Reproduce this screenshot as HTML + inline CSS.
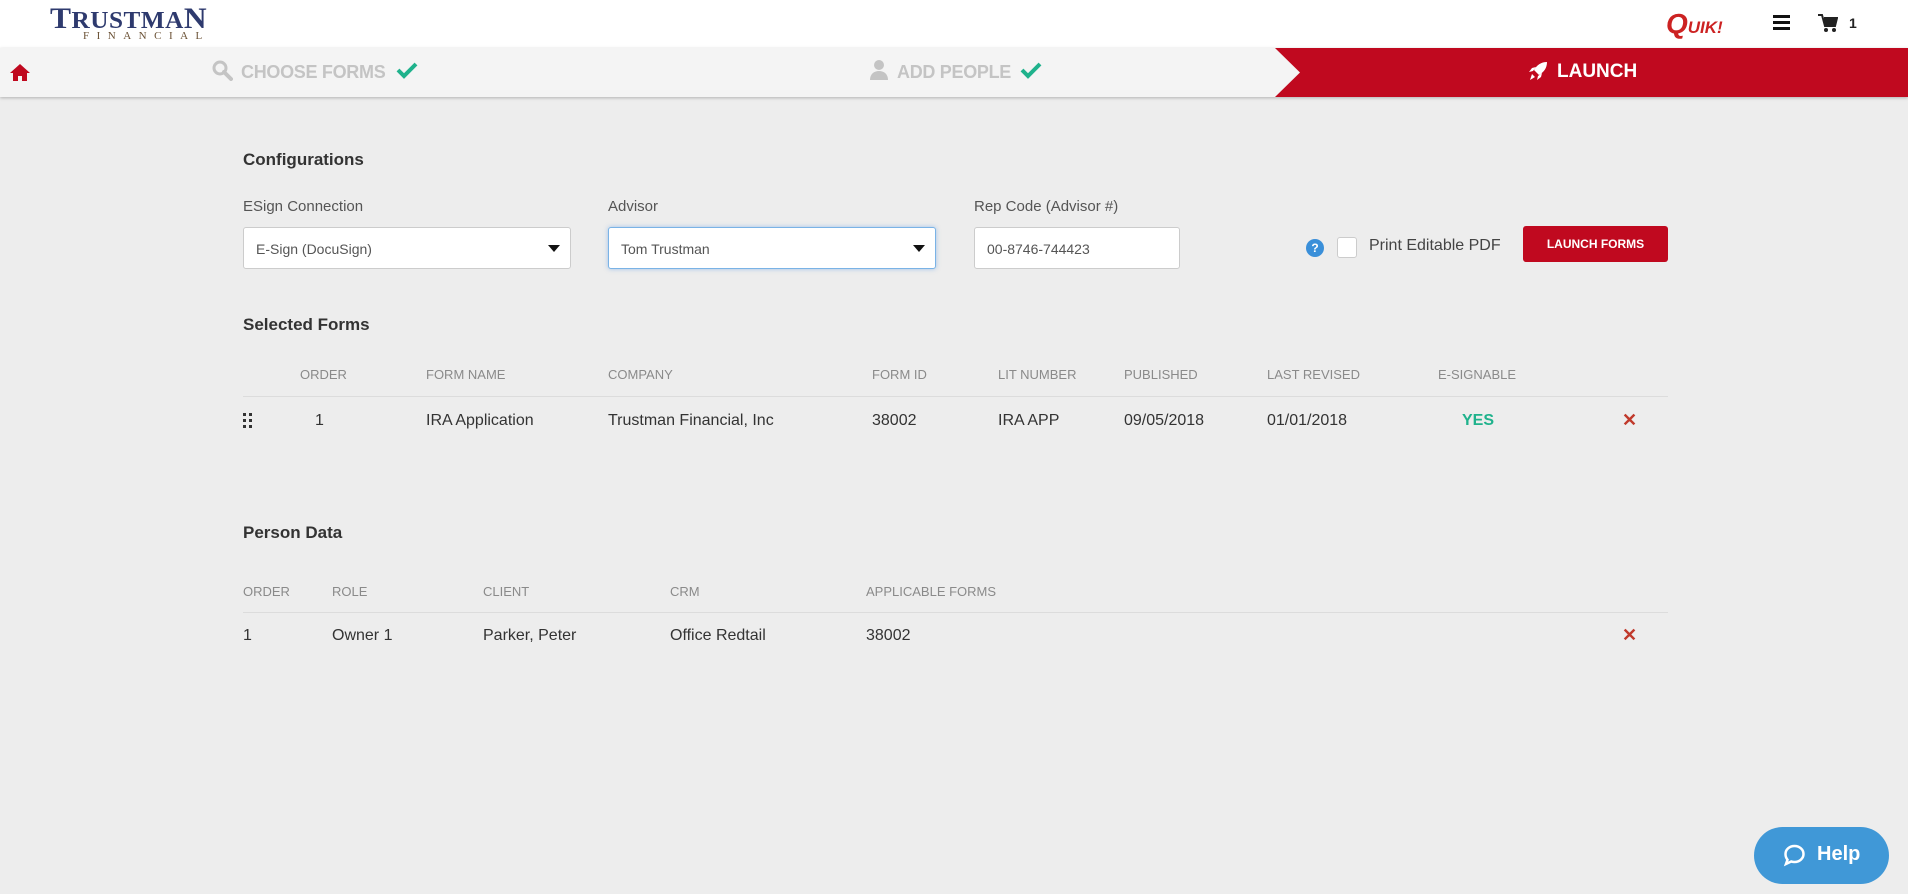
<!DOCTYPE html>
<html><head><meta charset="utf-8"><style>
*{margin:0;padding:0;box-sizing:border-box}
body{width:1908px;height:894px;background:#ededed;font-family:"Liberation Sans",sans-serif;color:#333;position:relative;overflow:hidden}
.a{position:absolute;white-space:nowrap}
.hdr{position:absolute;left:0;top:0;width:1908px;height:48px;background:#fff}
.nav{position:absolute;left:0;top:48px;width:1908px;height:49px;background:#f4f4f4;box-shadow:0 1px 3px rgba(0,0,0,.25)}
.step{font-size:18px;font-weight:bold;color:#c4c4c4;letter-spacing:-0.3px}
.lbl{font-size:15px;color:#555}
.box{position:absolute;top:227px;height:42px;background:#fff;border:1px solid #ccc;border-radius:3px;font-size:14px;color:#555;padding:13px 12px}
.tri{position:absolute;right:10px;top:17px;width:0;height:0;border-left:6px solid transparent;border-right:6px solid transparent;border-top:7px solid #111}
.th{font-size:13px;color:#8a8a8a}
.td{font-size:16px;color:#333}
.sec{font-size:17px;font-weight:bold;color:#333}
.x{color:#c0392b;font-size:18px;font-weight:bold}
</style></head><body>
<div class="hdr">
  <div class="a" style="left:50px;top:2px;font-family:'Liberation Serif',serif;font-weight:bold;font-size:30px;color:#2e3a6e;letter-spacing:0.5px;transform:scaleX(1.05);transform-origin:left">T<span style="font-size:24px">RUSTMA</span>N</div>
  <div class="a" style="left:83px;top:30px;font-family:'Liberation Serif',serif;font-size:11px;color:#6b5236;letter-spacing:7.5px">FINANCIAL</div>
  <div class="a" style="left:1666px;top:8px;font-size:22px;font-weight:bold;font-style:italic;color:#c22"><span style="font-size:28px">Q</span><span style="color:#c22;font-size:17px">UIK!</span></div>
  <div class="a" style="left:1773px;top:15px;width:17px;height:3px;background:#111;box-shadow:0 6px 0 #111,0 12px 0 #111"></div>
  <svg class="a" style="left:1818px;top:14px" width="20" height="19" viewBox="0 0 20 19"><path d="M0 1h4l3 11h10l2-8H6" fill="none" stroke="#222" stroke-width="2"/><rect x="6" y="4" width="12" height="7" fill="#222"/><circle cx="8" cy="16" r="2" fill="#222"/><circle cx="16" cy="16" r="2" fill="#222"/></svg>
  <div class="a" style="left:1849px;top:15px;font-size:14px;font-weight:bold;color:#222">1</div>
</div>
<div class="nav">
  <svg class="a" style="left:9px;top:15px" width="22" height="19" viewBox="0 0 22 19"><path d="M11 1L1 10h3v8h5v-5h4v5h5v-8h3z" fill="#c0091f"/></svg>
  <svg class="a" style="left:212px;top:12px" width="21" height="21" viewBox="0 0 21 21"><circle cx="8" cy="8" r="6" fill="none" stroke="#c4c4c4" stroke-width="3"/><path d="M12 12l7 7" stroke="#c4c4c4" stroke-width="4" stroke-linecap="round"/></svg>
  <div class="a step" style="left:241px;top:14px">CHOOSE FORMS</div>
  <svg class="a" style="left:396px;top:13px" width="22" height="18" viewBox="0 0 22 18"><path d="M2 9l6 6L20 3" fill="none" stroke="#1fb28c" stroke-width="4"/></svg>
  <svg class="a" style="left:869px;top:11px" width="20" height="22" viewBox="0 0 20 22"><circle cx="10" cy="6" r="5" fill="#c4c4c4"/><path d="M1 21c0-6 4-9 9-9s9 3 9 9z" fill="#c4c4c4"/></svg>
  <div class="a step" style="left:897px;top:14px">ADD PEOPLE</div>
  <svg class="a" style="left:1020px;top:13px" width="22" height="18" viewBox="0 0 22 18"><path d="M2 9l6 6L20 3" fill="none" stroke="#1fb28c" stroke-width="4"/></svg>
  <svg class="a" style="left:1275px;top:0" width="633" height="49"><path d="M0 0H633V49H0L25 24.5Z" fill="#c0091f"/></svg>
  <svg class="a" style="left:1527px;top:12px" width="22" height="22" viewBox="0 0 22 22"><path d="M20 2c-6 0-10 3-13 8l5 5c5-3 8-7 8-13zM6 11l-4 1 3-4 4-1zM11 16l-1 4 4-3 1-4zM5 14l3 3-5 3z" fill="#fff"/></svg>
  <div class="a" style="left:1557px;top:13px;font-size:19px;font-weight:bold;color:#fff">LAUNCH</div>
</div>

<div class="a sec" style="left:243px;top:150px">Configurations</div>
<div class="a lbl" style="left:243px;top:198px">ESign Connection</div>
<div class="a lbl" style="left:608px;top:198px">Advisor</div>
<div class="a lbl" style="left:974px;top:198px">Rep Code (Advisor #)</div>
<div class="box" style="left:243px;width:328px">E-Sign (DocuSign)<div class="tri"></div></div>
<div class="box" style="left:608px;width:328px;border-color:#7ab3e6;box-shadow:0 0 5px rgba(80,150,230,.5)">Tom Trustman<div class="tri"></div></div>
<div class="box" style="left:974px;width:206px">00-8746-744423</div>
<div class="a" style="left:1306px;top:239px;width:18px;height:18px;border-radius:50%;background:#3a8fd9;color:#fff;font-size:12px;font-weight:bold;text-align:center;line-height:18px">?</div>
<div class="a" style="left:1337px;top:237px;width:20px;height:21px;background:#fff;border:1px solid #ccc;border-radius:3px"></div>
<div class="a" style="left:1369px;top:237px;font-size:16px;color:#444">Print Editable PDF</div>
<div class="a" style="left:1523px;top:226px;width:145px;height:36px;background:#c0091f;border-radius:3px;color:#fff;font-size:12px;font-weight:bold;text-align:center;line-height:36px">LAUNCH FORMS</div>

<div class="a sec" style="left:243px;top:315px">Selected Forms</div>
<div class="a th" style="left:300px;top:367px">ORDER</div>
<div class="a th" style="left:426px;top:367px">FORM NAME</div>
<div class="a th" style="left:608px;top:367px">COMPANY</div>
<div class="a th" style="left:872px;top:367px">FORM ID</div>
<div class="a th" style="left:998px;top:367px">LIT NUMBER</div>
<div class="a th" style="left:1124px;top:367px">PUBLISHED</div>
<div class="a th" style="left:1267px;top:367px">LAST REVISED</div>
<div class="a th" style="left:1438px;top:367px">E-SIGNABLE</div>
<div class="a" style="left:243px;top:396px;width:1425px;height:1px;background:#dcdcdc"></div>
<svg class="a" style="left:243px;top:413px" width="10" height="16"><g fill="#333"><rect x="0" y="0" width="3" height="3"/><rect x="6" y="0" width="3" height="3"/><rect x="0" y="6" width="3" height="3"/><rect x="6" y="6" width="3" height="3"/><rect x="0" y="12" width="3" height="3"/><rect x="6" y="12" width="3" height="3"/></g></svg>
<div class="a td" style="left:315px;top:412px">1</div>
<div class="a td" style="left:426px;top:412px">IRA Application</div>
<div class="a td" style="left:608px;top:412px">Trustman Financial, Inc</div>
<div class="a td" style="left:872px;top:412px">38002</div>
<div class="a td" style="left:998px;top:412px">IRA APP</div>
<div class="a td" style="left:1124px;top:412px">09/05/2018</div>
<div class="a td" style="left:1267px;top:412px">01/01/2018</div>
<div class="a td" style="left:1462px;top:412px;color:#1fb28c;font-weight:bold">YES</div>
<div class="a x" style="left:1622px;top:410px">✕</div>

<div class="a sec" style="left:243px;top:523px">Person Data</div>
<div class="a th" style="left:243px;top:584px">ORDER</div>
<div class="a th" style="left:332px;top:584px">ROLE</div>
<div class="a th" style="left:483px;top:584px">CLIENT</div>
<div class="a th" style="left:670px;top:584px">CRM</div>
<div class="a th" style="left:866px;top:584px">APPLICABLE FORMS</div>
<div class="a" style="left:243px;top:612px;width:1425px;height:1px;background:#dcdcdc"></div>
<div class="a td" style="left:243px;top:627px">1</div>
<div class="a td" style="left:332px;top:627px">Owner 1</div>
<div class="a td" style="left:483px;top:627px">Parker, Peter</div>
<div class="a td" style="left:670px;top:627px">Office Redtail</div>
<div class="a td" style="left:866px;top:627px">38002</div>
<div class="a x" style="left:1622px;top:625px">✕</div>

<div class="a" style="left:1754px;top:827px;width:135px;height:57px;border-radius:29px;background:#4098d7"></div>
<svg class="a" style="left:1782px;top:843px" width="25" height="25" viewBox="0 0 25 25"><path d="M12.5 3c5 0 9 3.5 9 8s-4 8-9 8c-1.2 0-2.3-.2-3.3-.5L4 21l1.5-4.3C4.2 15.2 3.5 13.2 3.5 11c0-4.5 4-8 9-8z" fill="none" stroke="#fff" stroke-width="2.5"/></svg>
<div class="a" style="left:1817px;top:843px;font-size:20px;font-weight:bold;color:#fff">Help</div>
</body></html>
